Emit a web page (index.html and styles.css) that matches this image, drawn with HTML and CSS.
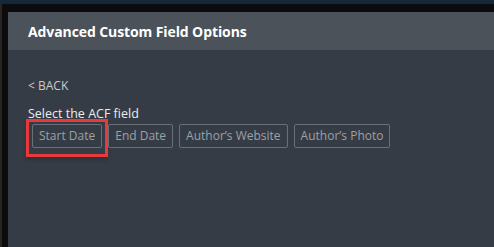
FILE: index.html
```html
<!DOCTYPE html>
<html>
<head>
<meta charset="utf-8">
<link rel="stylesheet" href="styles.css">
</head>
<body>
<div class="topbar"></div>
<div class="frame">
  <div class="panel">
    <div class="panel-head">Advanced Custom Field Options</div>
    <div class="panel-body">
      <a class="back">&lt; BACK</a>
      <div class="label">Select the ACF field</div>
      <div class="fields">
        <button class="field highlighted">Start Date</button>
        <button class="field">End Date</button>
        <button class="field">Author’s Website</button>
        <button class="field">Author’s Photo</button>
      </div>
    </div>
  </div>
</div>
</body>
</html>
```
FILE: styles.css
```css
html, body {
  margin: 0;
  height: 100%;
}
body {
  background: #0c0c0e;
  font-family: "Open Sans", "Noto Sans", sans-serif;
  display: flex;
  flex-direction: column;
  overflow: hidden;
}
.topbar {
  height: 4px;
  background: #13293a;
  flex: none;
}
.frame {
  flex: 1;
  display: flex;
  padding-top: 8px;
  padding-left: 8px;
  background: linear-gradient(to right, #2b2521 0 2px, #0c0c0e 2px);
}
.panel {
  flex: 1;
  display: flex;
  flex-direction: column;
  background: #363c45;
}
.panel-head {
  height: 38px;
  box-sizing: border-box;
  background: #4b5259;
  color: #ffffff;
  font-weight: 700;
  font-size: 14px;
  display: flex;
  align-items: center;
  padding-left: 20px;
  letter-spacing: -0.1px;
}
.panel-body {
  padding: 28px 20px 0 20px;
  display: flex;
  flex-direction: column;
}
.back {
  color: #c9ccd0;
  font-size: 12px;
  line-height: 16px;
}
.label {
  margin-top: 12px;
  color: #eceded;
  font-size: 12.5px;
  line-height: 16px;
}
.fields {
  display: flex;
  gap: 6px;
  margin-top: 2px;
  padding-left: 4px;
}
.field {
  position: relative;
  height: 24px;
  padding: 0 6px;
  background: transparent;
  border: 1px solid #6a7078;
  border-radius: 2px;
  color: #9ca1a7;
  font-family: inherit;
  font-size: 12px;
  line-height: 20px;
}
.highlighted::after {
  content: "";
  position: absolute;
  left: -7px;
  right: -7px;
  top: -6px;
  bottom: -10px;
  border: 3.5px solid #e63a3d;
  box-shadow: 0 3px 4px rgba(0, 0, 0, 0.18);
}
```
